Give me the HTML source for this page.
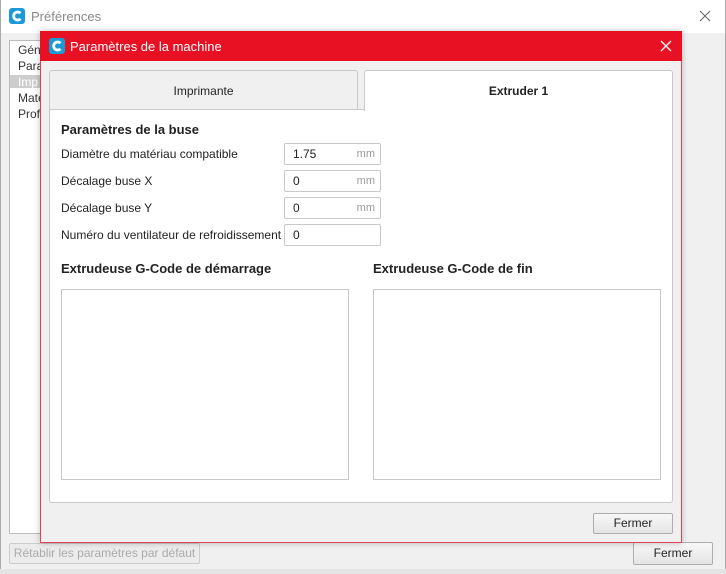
<!DOCTYPE html>
<html><head><meta charset="utf-8"><style>
*{margin:0;padding:0;box-sizing:border-box}
body{width:726px;height:574px;overflow:hidden;background:#f0f0f0;font-family:"Liberation Sans","DejaVu Sans",sans-serif;font-size:12px;color:#222;position:relative}
.a{position:absolute}
.logo{position:absolute;width:16px;height:16px}
.inp{position:absolute;left:284px;width:97px;height:22px;background:#fff;border:1px solid #c9c9c9;border-radius:2px;font-size:12px;padding:3px 0 0 8px}
.inp span{position:absolute;right:5px;top:4px;color:#999;font-size:11px}
.lbl{position:absolute;left:61px;font-size:12px}
.h{position:absolute;font-weight:bold;font-size:13px;color:#222}
.ta{position:absolute;top:289px;width:288px;height:191px;background:#fff;border:1px solid #c8c8c8}
.btn{position:absolute;background:linear-gradient(#f8f8f8,#e4e4e4);border:1px solid #adadad;border-radius:2px;text-align:center;font-size:12px}
</style></head><body>
<div class="a" style="left:0;top:0;width:726px;height:33px;background:#fff"></div>
<div class="a" style="left:0;top:0;width:1px;height:574px;background:#aaa"></div>
<div class="a" style="left:725px;top:0;width:1px;height:574px;background:#aaa"></div>
<svg class="logo" style="left:9px;top:8px" viewBox="0 0 16 16"><rect width="16" height="16" rx="3" fill="#1b9ad8"/><path d="M11.5 5.2A4 4 0 1 0 11.5 10.8" stroke="#fff" stroke-width="2.8" fill="none"/></svg>
<div class="a" style="left:31px;top:9px;font-size:13px;color:#888">Préférences</div>
<svg class="a" style="left:699px;top:10px" width="12" height="12"><path d="M1 1L11 11M11 1L1 11" stroke="#666" stroke-width="1"/></svg>
<div class="a" style="left:9px;top:40px;width:40px;height:494px;background:#fff;border:1px solid #bbb"></div>
<div class="a" style="left:10px;top:75px;width:38px;height:13px;background:#cdcdcd"></div>
<div class="a" style="left:18px;top:42px;font-size:12px;line-height:16px;color:#333">Gén<br>Para<br><span style="color:#fff">Imp</span><br>Mate<br>Prof</div>
<div class="btn" style="left:9px;top:543px;width:191px;height:21px;color:#aaa;background:#ececec;border-color:#ccc;line-height:19px">Rétablir les paramètres par défaut</div>
<div class="btn" style="left:633px;top:542px;width:80px;height:23px;line-height:21px">Fermer</div>
<div class="a" style="left:0;top:569px;width:726px;height:5px;background:#e4e4e4"></div>

<div class="a" style="left:40px;top:31px;width:642px;height:512px;background:#f0f0f0;border:1px solid #e0424f;box-shadow:0 0 6px rgba(0,0,0,.25)"></div>
<div class="a" style="left:40px;top:31px;width:642px;height:30px;background:#e81123"></div>
<svg class="logo" style="left:49px;top:38px" viewBox="0 0 16 16"><rect width="16" height="16" rx="3" fill="#1b9ad8"/><path d="M11.5 5.2A4 4 0 1 0 11.5 10.8" stroke="#fff" stroke-width="2.8" fill="none"/></svg>
<div class="a" style="left:70px;top:39px;font-size:13px;color:#fff">Paramètres de la machine</div>
<svg class="a" style="left:660px;top:40px" width="12" height="12"><path d="M1 1L11 11M11 1L1 11" stroke="#fff" stroke-width="1.3"/></svg>

<div class="a" style="left:49px;top:109px;width:624px;height:394px;background:#fff;border:1px solid #c9c9c9;border-radius:0 0 3px 3px"></div>
<div class="a" style="left:49px;top:70px;width:309px;height:40px;background:#f0f0f0;border:1px solid #c9c9c9;border-radius:3px 3px 0 0;text-align:center;line-height:40px;font-size:12px">Imprimante</div>
<div class="a" style="left:364px;top:70px;width:309px;height:41px;background:#fff;border:1px solid #c9c9c9;border-bottom:none;border-radius:3px 3px 0 0;text-align:center;line-height:40px;font-size:12px;font-weight:bold">Extruder 1</div>

<div class="h" style="left:61px;top:122px">Paramètres de la buse</div>
<div class="lbl" style="top:147px">Diamètre du matériau compatible</div>
<div class="lbl" style="top:174px">Décalage buse X</div>
<div class="lbl" style="top:201px">Décalage buse Y</div>
<div class="lbl" style="top:228px">Numéro du ventilateur de refroidissement</div>
<div class="inp" style="top:143px">1.75<span>mm</span></div>
<div class="inp" style="top:170px">0<span>mm</span></div>
<div class="inp" style="top:197px">0<span>mm</span></div>
<div class="inp" style="top:224px">0</div>
<div class="h" style="left:61px;top:261px">Extrudeuse G-Code de démarrage</div>
<div class="h" style="left:373px;top:261px">Extrudeuse G-Code de fin</div>
<div class="ta" style="left:61px"></div>
<div class="ta" style="left:373px"></div>
<div class="btn" style="left:593px;top:513px;width:80px;height:21px;line-height:19px">Fermer</div>
</body></html>
